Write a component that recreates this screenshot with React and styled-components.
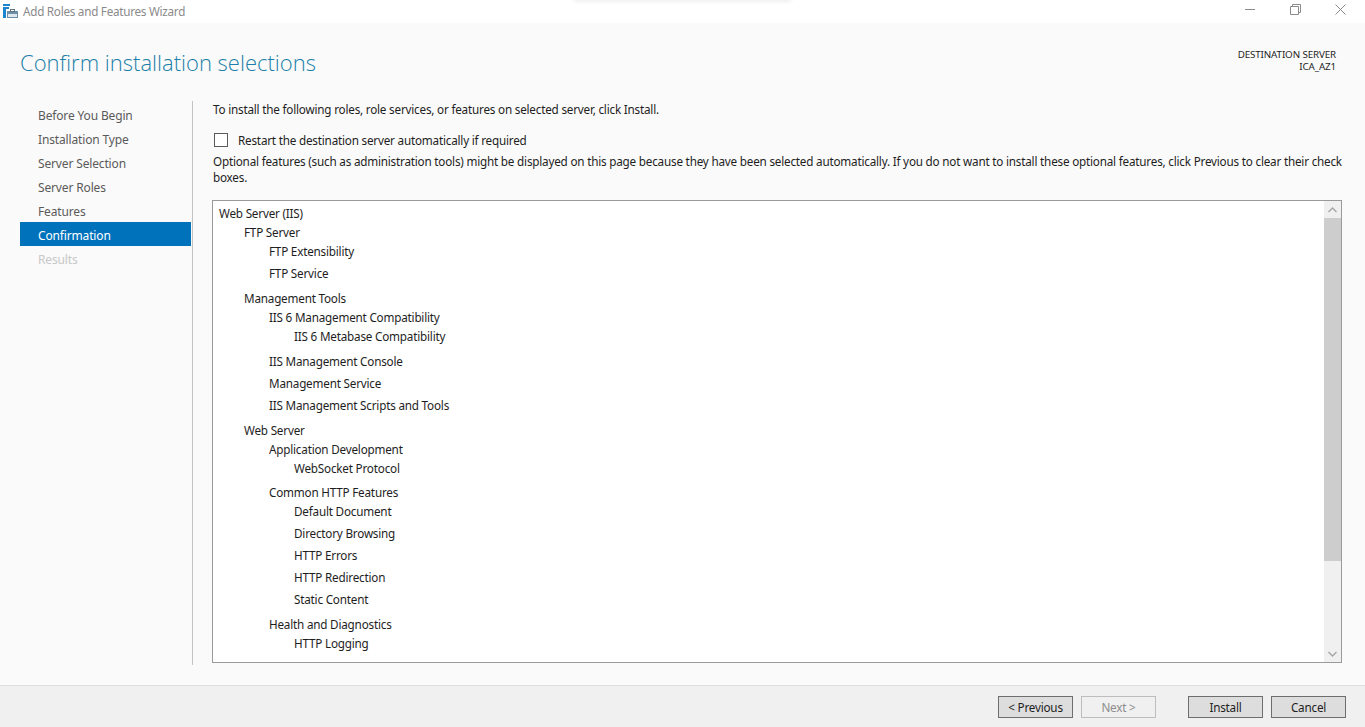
import React from "react";
import styled, { createGlobalStyle } from "styled-components";

const Global = createGlobalStyle`
  html, body { margin: 0; padding: 0; height: 100%; overflow: hidden; background: #fafafa; }
  #root { height: 100%; }
  * { box-sizing: border-box; }
`;

const Window = styled.div`
  position: relative;
  width: 1365px; height: 727px;
  display: flex; flex-direction: column;
  font-family: "Noto Sans", "Open Sans", sans-serif;
  font-size: 11.7px; letter-spacing: -0.2px; color: #1e1e1e; background: #fafafa;
`;
const TopGlow = styled.div`
  position: absolute; top: -3px; left: 575px; width: 215px; height: 3px;
  box-shadow: 0 0 5px 1px rgba(0, 0, 0, 0.09);
`;
const TitleBar = styled.div`
  height: 23px; flex: none; background: #fff;
  display: flex; align-items: center; padding-left: 3px; gap: 5px;
`;
const TitleText = styled.span`
  color: #8a8a8a; flex: 1; line-height: 23px; letter-spacing: -0.26px;
`;
const WinControls = styled.div`
  display: flex; align-items: center; padding-right: 19px; gap: 34px; margin-top: -4px;
`;
const Header = styled.div`
  height: 78px; flex: none;
  display: flex; justify-content: space-between;
  padding: 0 29px 0 20px;
`;
const Heading = styled.h1`
  margin: 23px 0 0; font-weight: 300; font-size: 22px; line-height: 32px;
  color: #1b7fa8; letter-spacing: 0;
  font-family: "Open Sans", "Noto Sans", sans-serif;
`;
const Destination = styled.div`
  margin-top: 26px; text-align: right; font-size: 9.8px; line-height: 12px; color: #1e1e1e; letter-spacing: -0.12px;
`;
const Body = styled.div`
  flex: 1; min-height: 0;
  display: flex; padding: 0 19px 0 20px;
`;
const Nav = styled.nav`
  width: 173px; flex: none; height: 564px;
  border-right: 1px solid #c4c4c4; padding-top: 1px;
  margin-right: 20px;
  font-size: 12px; letter-spacing: -0.15px;
`;
const NavItem = styled.div`
  width: 171px; height: 24px; line-height: 28px; padding-left: 18px;
  color: ${p => p.$active ? "#fff" : p.$disabled ? "#c8c8c8" : "#5a5a5a"};
  background: ${p => p.$active ? "#0072bc" : "transparent"};
`;
const Content = styled.div`
  flex: 1; min-width: 0; margin-top: -1px; display: flex; flex-direction: column;
`;
const Intro = styled.p`
  margin: 0; line-height: 18px;
`;
const CheckRow = styled.label`
  display: flex; align-items: center; height: 18px; margin-top: 13px; gap: 10px;
`;
const CheckBox = styled.span`
  width: 14px; height: 14px; margin-left: 1px; margin-top: -1px; border: 1px solid #5a5a5a; background: #fff; flex: none;
`;
const Note = styled.p`
  margin: 4px 0 0; line-height: 16px;
`;
const TreeBox = styled.div`
  margin: 15px 0 0 -1px; width: 1130px; height: 463px; flex: none;
  border: 1px solid #9a9a9a; background: #fff;
  display: flex; overflow: hidden;
`;
const TreeArea = styled.div`
  flex: 1; padding: 3px 0 0 6px; overflow: hidden;
`;
const List = styled.div`
  padding-left: ${p => p.$root ? 0 : 25}px;
`;
const Node = styled.div`
  padding-bottom: ${p => p.$tight ? 2 : 3}px;
`;
const Label = styled.div`
  height: 19px; line-height: 19px; white-space: nowrap;
`;
const ScrollBar = styled.div`
  width: 17px; flex: none; background: #f0f0f0;
  display: flex; flex-direction: column;
`;
const ScrollBtn = styled.div`
  height: 17px; flex: none; display: flex; align-items: center; justify-content: center;
`;
const ScrollTrack = styled.div`
  flex: 1; display: flex; flex-direction: column;
`;
const ScrollThumb = styled.div`
  height: 343px; background: #cdcdcd;
`;
const Footer = styled.div`
  height: 42px; flex: none; background: #f0f0f0; border-top: 1px solid #dfdfdf;
  display: flex; align-items: flex-start; justify-content: flex-end;
  padding: 10px 19px 0 0;
`;
const Button = styled.button`
  width: 75px; height: 22px; padding: 0;
  margin-left: ${p => p.$gap || 8}px;
  border: 1px solid ${p => p.disabled ? "#bdbdbd" : "#6e6e6e"};
  background: ${p => p.disabled ? "#f0f0f0" : "#dddddd"};
  color: ${p => p.disabled ? "#8c8c8c" : "#1e1e1e"};
  font: inherit; letter-spacing: inherit; line-height: 20px;
`;

const tree = [
  ["Web Server (IIS)", [
    ["FTP Server", [["FTP Extensibility"], ["FTP Service"]]],
    ["Management Tools", [
      ["IIS 6 Management Compatibility", [["IIS 6 Metabase Compatibility"]]],
      ["IIS Management Console"], ["Management Service"], ["IIS Management Scripts and Tools"],
    ]],
    ["Web Server", [
      ["Application Development", [["WebSocket Protocol"]], true],
      ["Common HTTP Features", [["Default Document"], ["Directory Browsing"], ["HTTP Errors"], ["HTTP Redirection"], ["Static Content"]]],
      ["Health and Diagnostics", [["HTTP Logging"]]],
    ]],
  ]],
];

const Tree = ({ items, root }) => (
  <List $root={root}>
    {items.map(([label, kids, tight]) => (
      <Node key={label} $tight={tight}>
        <Label>{label}</Label>
        {kids && <Tree items={kids} />}
      </Node>
    ))}
  </List>
);

const AppIcon = () => (
  <svg width="15" height="15" viewBox="0 0 15 15">
    <rect x="0" y="0" width="7" height="2" fill="#1a86d0" />
    <rect x="0" y="3" width="3" height="11" fill="#1a86d0" />
    <rect x="3" y="3" width="3" height="2" fill="#1a86d0" />
    <rect x="4" y="7" width="11" height="7" fill="#6f8fa6" />
    <rect x="5" y="10" width="9" height="3" fill="#dfe7ec" />
    <rect x="7.5" y="5.5" width="4" height="2" fill="none" stroke="#5f7484" strokeWidth="1" />
  </svg>
);

const Chevron = ({ up }) => (
  <svg width="9" height="6" viewBox="0 0 9 6">
    <path d={up ? "M0.5 5 L4.5 1 L8.5 5" : "M0.5 1 L4.5 5 L8.5 1"} fill="none" stroke="#a6a6a6" strokeWidth="1.4" />
  </svg>
);

const steps = ["Before You Begin", "Installation Type", "Server Selection", "Server Roles", "Features", "Confirmation", "Results"];

export default function App() {
  return (
    <Window>
      <Global />
      <TopGlow />
      <TitleBar>
        <AppIcon />
        <TitleText>Add Roles and Features Wizard</TitleText>
        <WinControls>
          <svg width="11" height="11" viewBox="0 0 11 11"><path d="M0 5.5H10" stroke="#8a8a8a" /></svg>
          <svg width="11" height="11" viewBox="0 0 11 11"><path d="M0.5 2.5H8.5V10.5H0.5Z M2.5 2.5V0.5H10.5V8.5H8.5" fill="none" stroke="#8a8a8a" /></svg>
          <svg width="11" height="11" viewBox="0 0 11 11"><path d="M0.5 0.5L10.5 10.5M10.5 0.5L0.5 10.5" stroke="#8a8a8a" /></svg>
        </WinControls>
      </TitleBar>
      <Header>
        <Heading>Confirm installation selections</Heading>
        <Destination>DESTINATION SERVER<br />ICA_AZ1</Destination>
      </Header>
      <Body>
        <Nav>
          {steps.map(s => (
            <NavItem key={s} $active={s === "Confirmation"} $disabled={s === "Results"}>{s}</NavItem>
          ))}
        </Nav>
        <Content>
          <Intro>To install the following roles, role services, or features on selected server, click Install.</Intro>
          <CheckRow><CheckBox />Restart the destination server automatically if required</CheckRow>
          <Note>Optional features (such as administration tools) might be displayed on this page because they have been selected automatically. If you do not want to install these optional features, click Previous to clear their check boxes.</Note>
          <TreeBox>
            <TreeArea><Tree items={tree} root /></TreeArea>
            <ScrollBar>
              <ScrollBtn><Chevron up /></ScrollBtn>
              <ScrollTrack><ScrollThumb /></ScrollTrack>
              <ScrollBtn><Chevron /></ScrollBtn>
            </ScrollBar>
          </TreeBox>
        </Content>
      </Body>
      <Footer>
        <Button>&lt; Previous</Button>
        <Button disabled>Next &gt;</Button>
        <Button $gap={32}>Install</Button>
        <Button>Cancel</Button>
      </Footer>
    </Window>
  );
}
